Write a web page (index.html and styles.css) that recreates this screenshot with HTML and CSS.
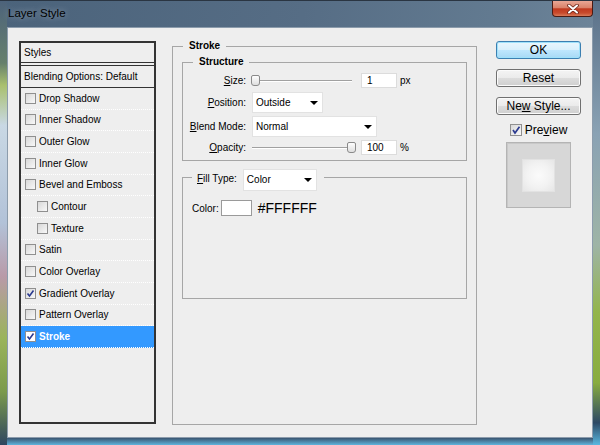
FILE: index.html
```html
<!DOCTYPE html>
<html lang="en">
  <head>
    <meta charset="UTF-8" />
    <meta name="viewport" content="width=device-width, initial-scale=1.0" />
    <link rel="stylesheet" href="styles.css">
  </head>
  <body>
    <div class="window">
      <!-- Title bar -->
      <div class="titlebar">
        <span class="title">Layer Style</span>
        <div class="close">
          <svg width="18" height="10" viewBox="0 0 18 10">
            <path d="M5 1.5 L13 8.5 M13 1.5 L5 8.5" stroke="#6b2418" stroke-width="3.6" stroke-linecap="round" />
            <path d="M5 1.5 L13 8.5 M13 1.5 L5 8.5" stroke="#ffffff" stroke-width="2" stroke-linecap="round" />
          </svg>
        </div>
      </div>

      <div class="client">
        <!-- Styles list -->
        <div class="styles">
          <div class="styles-head">Styles</div>
          <div class="styles-blend">Blending Options: Default</div>
          <ul class="effects">
            <li><span class="check"></span>Drop Shadow</li>
            <li><span class="check"></span>Inner Shadow</li>
            <li><span class="check"></span>Outer Glow</li>
            <li><span class="check"></span>Inner Glow</li>
            <li><span class="check"></span>Bevel and Emboss</li>
            <li class="sub"><span class="check"></span>Contour</li>
            <li class="sub"><span class="check"></span>Texture</li>
            <li><span class="check"></span>Satin</li>
            <li><span class="check"></span>Color Overlay</li>
            <li>
              <span class="check">
                <svg width="9" height="9" viewBox="0 0 9 9"><path d="M1.5 4.5 L3.5 7 L7.5 1.5" fill="none" stroke="#2b3a8f" stroke-width="1.6" /></svg>
              </span>Gradient Overlay
            </li>
            <li><span class="check"></span>Pattern Overlay</li>
            <li class="selected">
              <span class="check">
                <svg width="9" height="9" viewBox="0 0 9 9"><path d="M1.5 4.5 L3.5 7 L7.5 1.5" fill="none" stroke="#2b3a8f" stroke-width="1.6" /></svg>
              </span>Stroke
            </li>
          </ul>
        </div>

        <!-- Stroke settings -->
        <fieldset class="group stroke">
          <legend>Stroke</legend>

          <fieldset class="group structure">
            <legend>Structure</legend>
            <div class="row slim">
              <span class="label"><u>S</u>ize:</span>
              <div class="slider"><span class="thumb thumb-min"></span></div>
              <span class="field">1</span>
              <span class="unit">px</span>
            </div>
            <div class="row">
              <span class="label"><u>P</u>osition:</span>
              <div class="select select-short"><span>Outside</span><i class="arrow"></i></div>
            </div>
            <div class="row">
              <span class="label"><u>B</u>lend Mode:</span>
              <div class="select select-long"><span>Normal</span><i class="arrow"></i></div>
            </div>
            <div class="row slim">
              <span class="label"><u>O</u>pacity:</span>
              <div class="slider"><span class="thumb thumb-max"></span></div>
              <span class="field">100</span>
              <span class="unit">%</span>
            </div>
          </fieldset>

          <fieldset class="group fill">
            <legend>
              <span><u>F</u>ill Type:</span>
              <div class="select select-fill"><span>Color</span><i class="arrow"></i></div>
            </legend>
            <div class="color-row">
              <span>Color:</span>
              <span class="swatch"></span>
              <span class="hex">#FFFFFF</span>
            </div>
          </fieldset>
        </fieldset>

        <!-- Buttons and preview -->
        <div class="actions">
          <div class="button default">OK</div>
          <div class="button">Reset</div>
          <div class="button">Ne<u>w</u> Style...</div>
          <div class="preview-toggle">
            <span class="check big">
              <svg width="10" height="10" viewBox="0 0 10 10"><path d="M2 5 L4 8 L8.5 1.8" fill="none" stroke="#2b3a8f" stroke-width="1.7" /></svg>
            </span>
            <span>Pre<u>v</u>iew</span>
          </div>
          <div class="preview">
            <div class="preview-swatch"></div>
          </div>
        </div>
      </div>
    </div>
  </body>
</html>
```

FILE: styles.css
```css
body {
  margin: 0;
  font-family: "Liberation Sans", Arial, sans-serif;
  font-size: 10px;
  color: #000;
  background: #4a627c;
}

.window {
  width: 600px;
  height: 445px;
  box-sizing: border-box;
  display: flex;
  flex-direction: column;
  padding: 0 7px 7px 7px;
  background:
    linear-gradient(to bottom, #4d637b 0, #66806c 14%, #a9c06e 19%, #c9d8e4 28%, #b2c2d8 50%, #b99aa8 62%, #9ab45a 76%, #7b9a4c 88%, #2e4660 100%) left top / 7px 100% no-repeat,
    linear-gradient(to bottom, #5a7088 0, #8aa2b4 30%, #9eb4a6 55%, #93b54c 70%, #88ac40 86%, #2c4864 95%, #58b8e0 100%) right top / 7px 100% no-repeat,
    linear-gradient(to bottom, #3a5470, #5fb4dc) left bottom / 100% 7px no-repeat,
    linear-gradient(100deg, #4b637b 0%, #566d85 45%, #637b91 75%, #768ca0 100%);
  border-top: 1px solid #2a3542;
}

.titlebar {
  height: 26px;
  display: flex;
  align-items: flex-start;
  justify-content: space-between;
}

.title {
  margin-top: 6px;
  margin-left: 1px;
  font-size: 11.5px;
  text-shadow: 0 0 6px rgba(255, 255, 255, 0.45);
}

.close {
  width: 41px;
  height: 16px;
  box-sizing: border-box;
  border: 1px solid #4a1a12;
  border-top: 0;
  border-radius: 0 0 4px 4px;
  background: linear-gradient(to bottom, #e9a795 0%, #d9826a 45%, #c0391f 52%, #c84a2c 80%, #d97a58 100%);
  display: flex;
  align-items: center;
  justify-content: center;
}

.client {
  flex: 1;
  display: flex;
  padding: 13px 10px 13px 11px;
  background: #eeeeee;
  border: 1px solid #8c9cac;
}

/* Styles list */

.styles {
  width: 137px;
  box-sizing: border-box;
  border: 2px solid #333;
  display: flex;
  flex-direction: column;
}

.styles-head {
  height: 19px;
  line-height: 19px;
  padding-left: 3px;
  border-bottom: 1px solid #333;
}

.styles-blend {
  height: 21px;
  line-height: 21px;
  margin-top: 2px;
  padding-left: 3px;
  border-top: 1px solid #333;
  border-bottom: 1px solid #333;
}

.effects {
  list-style: none;
  margin: 0;
  padding: 0;
}

.effects li {
  height: 21.67px;
  box-sizing: border-box;
  display: flex;
  align-items: center;
  padding-left: 4px;
  border-bottom: 1px dotted #ffffff;
}

.effects li.sub {
  padding-left: 16px;
}

.effects li.selected {
  background: #3399ff;
  color: #fff;
  font-weight: bold;
}

.check {
  width: 11px;
  height: 11px;
  box-sizing: border-box;
  margin-right: 3px;
  border: 1px solid #8f8f8f;
  background: linear-gradient(135deg, #d8d8d8, #f8f8f8);
  display: flex;
  align-items: center;
  justify-content: center;
}

.selected .check {
  background: #fff;
}

.check.big {
  width: 12px;
  height: 12px;
  margin-right: 3px;
}

/* Group boxes */

.group {
  margin: 0;
  min-inline-size: 0;
  border: 1px solid #a6a6a6;
}

.group legend {
  padding: 0 6px;
  line-height: 12px;
  font-weight: bold;
}

.stroke {
  width: 305px;
  box-sizing: border-box;
  margin: -1px 0 -1px 16px;
  padding: 4px 9px 0 9px;
}

.stroke > legend {
  margin-left: 1px;
}

.structure {
  padding: 5px 0 5px 3px;
}

.structure > legend {
  margin-left: 7px;
}

.row {
  display: flex;
  align-items: center;
  height: 21px;
  margin-top: 3px;
}

.row.slim {
  height: 15px;
}

.row:nth-of-type(2) {
  margin-top: 4px;
}

.row:first-of-type {
  margin-top: 0;
}

.label {
  width: 60px;
  margin-right: 6px;
  text-align: right;
}

.slider {
  position: relative;
  width: 100px;
  height: 15px;
  background:
    linear-gradient(#a0a0a0, #a0a0a0) center 7px / 100% 1px no-repeat,
    linear-gradient(#ffffff, #ffffff) center 8px / 100% 1px no-repeat;
}

.thumb {
  position: absolute;
  top: 2px;
  width: 9px;
  height: 11px;
  box-sizing: border-box;
  border: 1px solid #8a8a8a;
  border-radius: 2px 2px 3px 3px;
  background: linear-gradient(#fdfdfd, #dedede);
}

.thumb-min {
  left: -1px;
}

.thumb-max {
  left: 95px;
}

.field {
  width: 36px;
  height: 15px;
  box-sizing: border-box;
  margin-left: 9px;
  padding-left: 5px;
  line-height: 14px;
  background: #fff;
  border: 1px solid #dcdcdc;
}

.unit {
  margin-left: 3px;
}

.select {
  height: 21px;
  box-sizing: border-box;
  display: flex;
  align-items: center;
  justify-content: space-between;
  padding: 0 4px 0 3px;
  background: #fff;
  border: 1px solid #e2e2e2;
  font-weight: normal;
}

.select-short {
  width: 71px;
}

.select-long {
  width: 125px;
}

.select-fill {
  width: 74px;
  height: 22px;
  margin-bottom: -6px;
}

.arrow {
  width: 0;
  height: 0;
  border-top: 4px solid #000;
  border-left: 4px solid transparent;
  border-right: 4px solid transparent;
}

.fill {
  margin-top: 8px;
  padding: 15px 0 82px 9px;
}

.fill > legend {
  display: flex;
  align-items: flex-start;
  height: 16px;
  padding: 0 7px 0 5px;
  font-weight: normal;
  line-height: 16px;
}

.fill > legend > span {
  margin-top: 2px;
  margin-right: 6px;
}

.color-row {
  display: flex;
  align-items: center;
  height: 16px;
}

.swatch {
  width: 31px;
  height: 16px;
  box-sizing: border-box;
  margin-left: 2px;
  background: #fff;
  border: 1px solid #9a9a9a;
}

.hex {
  margin-left: 6px;
  font-size: 14px;
}

/* Buttons and preview */

.actions {
  width: 85px;
  margin-left: 19px;
  display: flex;
  flex-direction: column;
  align-items: center;
  font-size: 12px;
}

.button {
  width: 85px;
  height: 18px;
  box-sizing: border-box;
  margin-bottom: 10px;
  border: 1px solid #707070;
  border-radius: 3px;
  background: linear-gradient(to bottom, #f4f4f4 0, #ebebeb 48%, #dcdcdc 52%, #cfcfcf 100%);
  box-shadow: inset 0 0 0 1px #fbfbfb;
  text-align: center;
  line-height: 16px;
}

.button.default {
  border-color: #3c7fb1;
  background: linear-gradient(to bottom, #eaf6fd 0, #d9f0fc 48%, #bee6fd 52%, #a7d9f5 100%);
  box-shadow: inset 0 0 0 1px #9fe1fa;
}

.preview-toggle {
  display: flex;
  align-items: center;
  height: 12px;
  margin-top: -1px;
}

.preview {
  width: 65px;
  height: 66px;
  box-sizing: border-box;
  margin-top: 6px;
  border: 1px solid #b4b4b4;
  background: #d7d7d7;
  box-shadow: inset 1px 1px 0 #c8c8c8;
  display: flex;
  align-items: center;
  justify-content: center;
}

.preview-swatch {
  width: 33px;
  height: 33px;
  box-sizing: border-box;
  border: 1px solid #e2e2e2;
  background: radial-gradient(circle, #fbfbfb 0%, #f2f2f2 55%, #e6e6e6 100%);
}
```
